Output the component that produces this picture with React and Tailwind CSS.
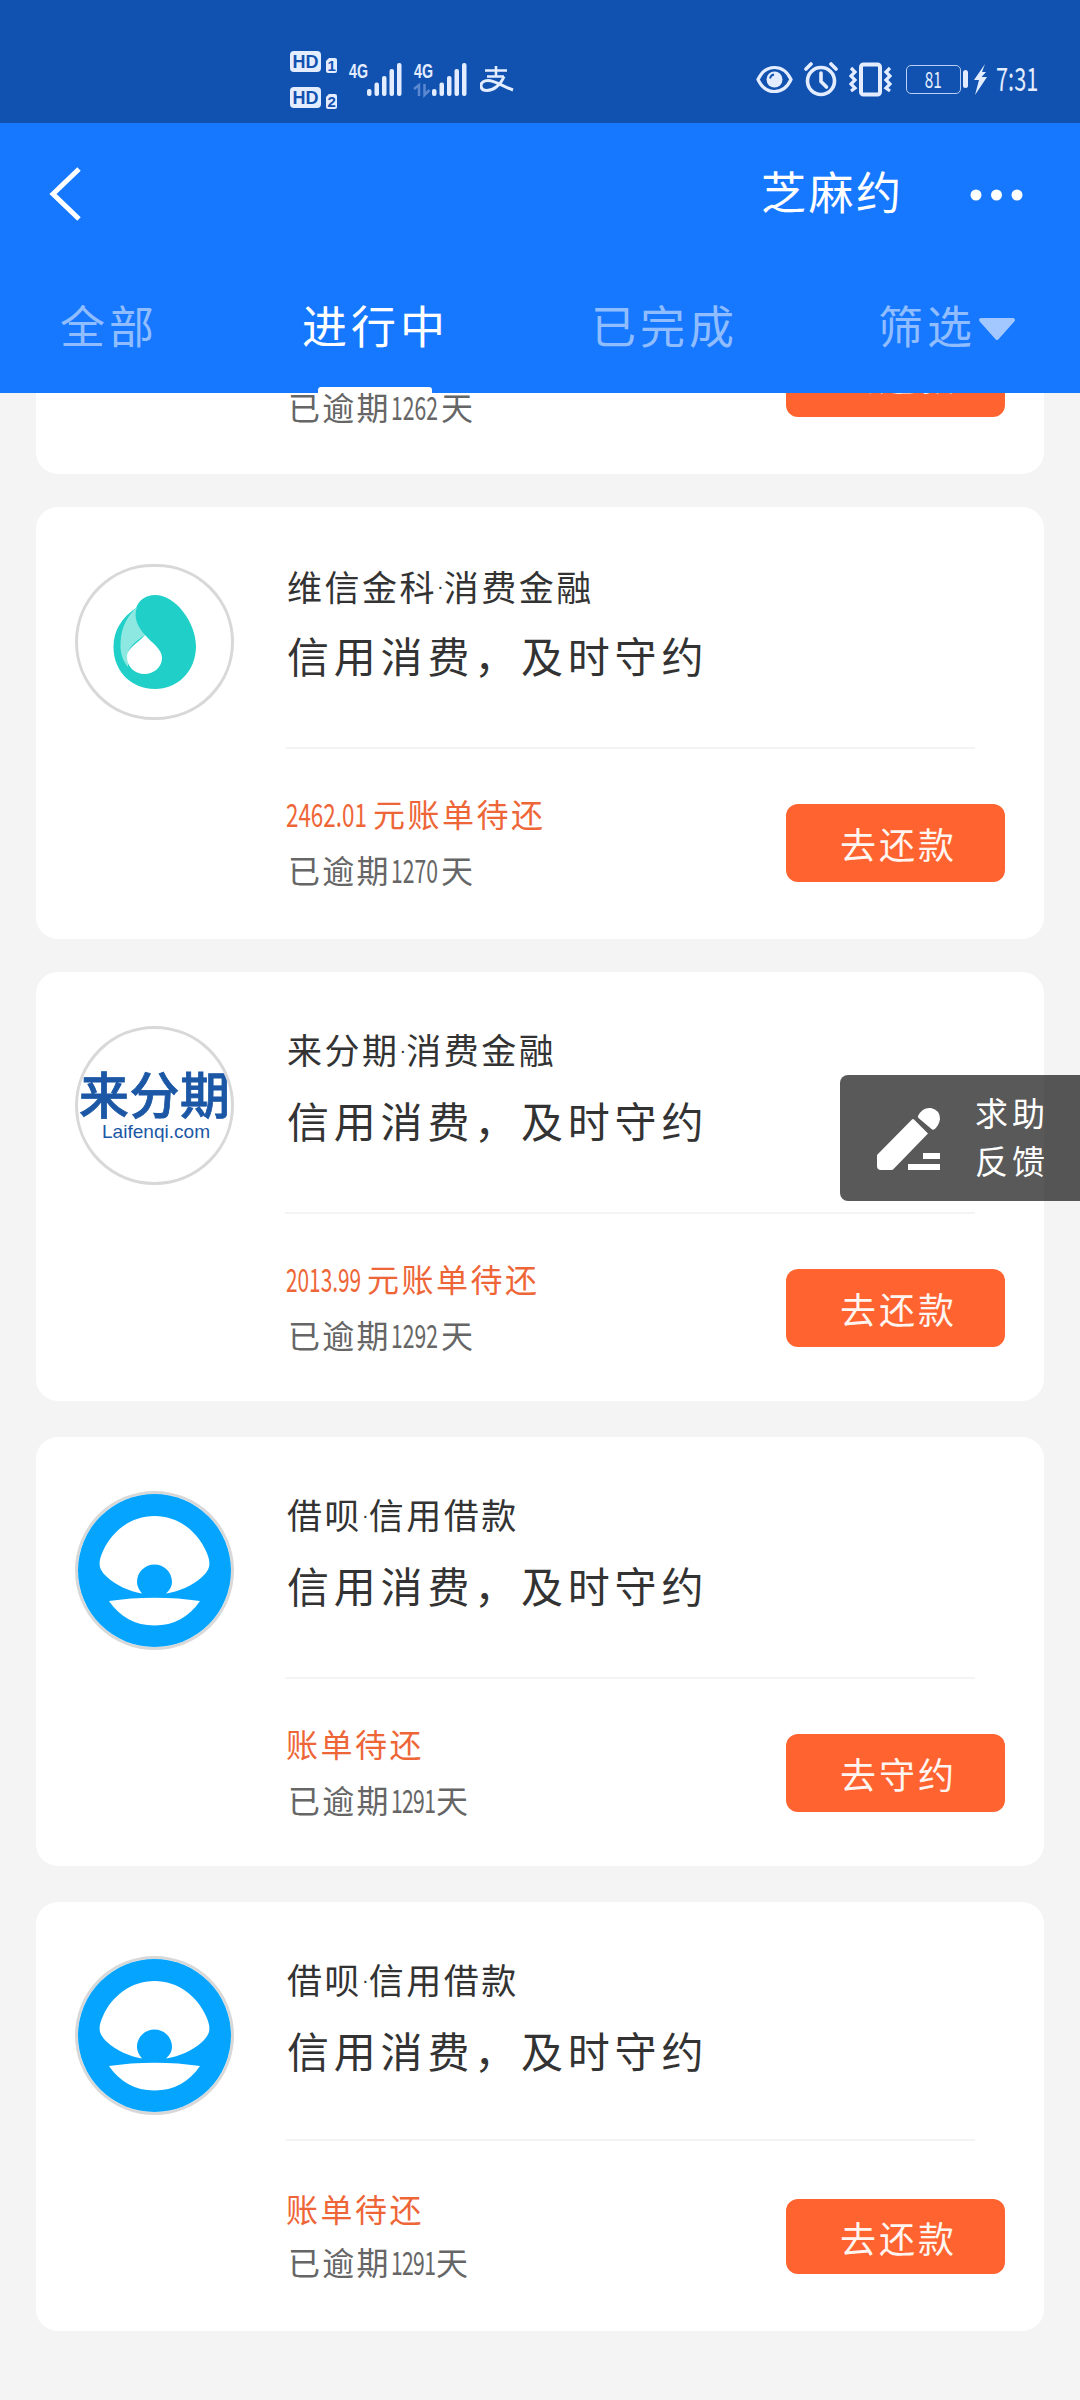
import React, { useState } from 'react';

const TABS = [
    { name: '全部', className: 'ml-[60px]' },
    { name: '进行中', className: 'ml-[144px]' },
    { name: '已完成', className: 'ml-[142px]' },
    { name: '筛选', className: 'ml-[140px]', filter: true },
];

const BILLS = [
    {
        id: 1, logo: 'drop', name: '维信金科', kind: '消费金融', amount: '2462.01', amountWidth: 'w-[87px] scale-x-[0.7]', days: '1270', action: '去还款',
        card: 'h-[432px] mb-[33px]', avatar: 'mt-[57px] h-[156px]', head: 'h-[242px] pt-[54px]', title: 'h-[50px]', button: 'mt-[55px] h-[78px]', lines: 'pt-[38px]', overdue: 'mt-[7px]',
    },
    {
        id: 2, logo: 'laifenqi', name: '来分期', kind: '消费金融', amount: '2013.99', amountWidth: 'w-[81px] scale-x-[0.65]', days: '1292', action: '去还款',
        card: 'h-[429px] mb-[36px]', avatar: 'mt-[54px] h-[159px]', head: 'h-[242px] pt-[51px]', title: 'h-[53px]', button: 'mt-[55px] h-[78px]', lines: 'pt-[38px]', overdue: 'mt-[7px]',
    },
    {
        id: 3, logo: 'shell', name: '借呗', kind: '信用借款', days: '1291', action: '去守约',
        card: 'h-[429px] mb-[36px]', avatar: 'mt-[54px] h-[159px]', head: 'h-[242px] pt-[51px]', title: 'h-[53px]', button: 'mt-[55px] h-[78px]', lines: 'pt-[38px]', overdue: 'mt-[7px]',
    },
    {
        id: 4, logo: 'shell', name: '借呗', kind: '信用借款', days: '1291', action: '去还款',
        card: 'h-[429px]', avatar: 'mt-[54px] h-[159px]', head: 'h-[239px] pt-[51px]', title: 'h-[53px]', button: 'mt-[58px] h-[75px]', lines: 'pt-[41px]', overdue: 'mt-[4px]',
    },
];

const HdBadge = ({ sim }) => (
    <svg className="overflow-visible" width="48" height="23" viewBox="0 0 48 23">
        <rect x="0" y="0" width="31" height="21" rx="4" fill="#e3edff" />
        <text x="2.5" y="17" fontSize="19" fontWeight="700" fill="#1152b0" textLength="26" lengthAdjust="spacingAndGlyphs" fontFamily="Liberation Sans, sans-serif">HD</text>
        <path d="M39 7h6q2 0 2 2v11q0 2-2 2h-7q-2 0-2-2V10z" fill="#e3edff" />
        <text x="37.500" y="20" fontSize="15" fontWeight="700" fill="#1152b0" fontFamily="Liberation Sans, sans-serif">{sim}</text>
    </svg>
);

const Signal = ({ data }) => (
    <svg className="overflow-visible" width="53" height="34" viewBox="0 0 53 34">
        <text x="0" y="15" fontSize="21" fontWeight="700" fill="#e3edff" textLength="19" lengthAdjust="spacingAndGlyphs" fontFamily="Liberation Sans, sans-serif">4G</text>
        {data && <path d="M0 26l5-4v11M5 22v11M10.500 21v11l5-5" fill="none" stroke="#5b88d0" strokeWidth="2.500" />}
        <g fill="#e3edff">
            <rect x="18" y="26" width="4.500" height="7" rx="2" />
            <rect x="25.500" y="19.500" width="4.500" height="13.500" rx="2" />
            <rect x="33" y="13" width="4.500" height="20" rx="2" />
            <rect x="40.500" y="6" width="4.500" height="27" rx="2" />
            <rect x="48" y="0" width="4.500" height="33" rx="2" />
        </g>
    </svg>
);

const StatusBar = () => (
    <div className="flex h-[123px] items-start bg-[#1152b0] text-[#e3edff]">
        <div className="ml-[290px] mt-[51px] flex flex-col gap-[13px]">
            <HdBadge sim="1" />
            <HdBadge sim="2" />
        </div>
        <div className="ml-[11px] mt-[63px] flex gap-3">
            <Signal />
            <Signal data />
        </div>
        <svg className="ml-[13px] mt-[66px]" width="34" height="27" viewBox="0 0 34 27" fill="none" stroke="#e3edff">
            <path d="M5 4.500h22M16 0v11M7 10.500h17" strokeWidth="2.600" />
            <path d="M24 10.500C20 20 13 24.500 7 24.500C2.500 24.500 1 22 1 19.500C1 16.500 4 14.500 8 14.500C15 14.500 22 20 33 24" strokeWidth="3" />
        </svg>
        <svg className="ml-[242px] mt-[65px]" width="37" height="29" viewBox="0 0 37 29">
            <path d="M2 14.500C6 6 12 2.500 18.500 2.500S31 6 35 14.500C31 23 25 26.500 18.500 26.500S6 23 2 14.500z" fill="none" stroke="#e3edff" strokeWidth="3.200" />
            <circle cx="18.500" cy="14.500" r="8" fill="#e3edff" />
            <path d="M14 13.500a5 5 0 0 1 4-4" fill="none" stroke="#1152b0" strokeWidth="1.800" />
        </svg>
        <svg className="ml-[11px] mt-[62px]" width="34" height="35" viewBox="0 0 34 35" fill="none" stroke="#e3edff" strokeWidth="3.600">
            <circle cx="17" cy="19" r="13.500" />
            <path d="M17 11v8.500l5.500 5.500" strokeLinecap="round" />
            <path d="M2 7l5-5M32 7l-5-5" strokeLinecap="round" />
        </svg>
        <svg className="ml-[11px] mt-[62px]" width="43" height="35" viewBox="0 0 43 35" fill="none" stroke="#e3edff">
            <rect x="12" y="2.500" width="19" height="30" rx="2.500" strokeWidth="4" />
            <path d="M2 6l4 4-4 4 4 4-4 4 4 4-4 3M41 6l-4 4 4 4-4 4 4 4-4 4 4 3" strokeWidth="3.200" />
        </svg>
        <div className="ml-[14px] mt-[65px] flex h-[29px] w-[55px] items-center justify-center rounded-[5px] border-[1.5px] border-[#b9cff5]">
            <span className="mt-[-3px] scale-x-[0.7] text-[22px] leading-none">81</span>
        </div>
        <div className="ml-[2px] mt-[70px] h-[18px] w-[5px] rounded-sm bg-[#e3edff]" />
        <svg className="ml-[6px] mt-[64px]" width="13" height="31" viewBox="0 0 13 31">
            <path d="M11 0L0 16h5L1 31L13 13H7.500L12 8H8z" fill="#e3edff" />
        </svg>
        <span className="ml-[9px] mt-[59px] w-[42px] origin-left scale-x-[0.68] whitespace-nowrap text-[32px] leading-[36px]">7:31</span>
    </div>
);

const Header = ({ activeTab, setActiveTab }) => (
    <header className="h-[270px] bg-[#1677ff] text-white">
        <div className="flex h-[141px] items-center">
            <svg className="ml-[48px]" width="34" height="54" viewBox="0 0 34 54" fill="none" stroke="#fff" strokeWidth="5">
                <path d="M31 2L5 27L31 52" />
            </svg>
            <h1 className="-mt-[6px] ml-[679px] w-[142px] whitespace-nowrap text-[45px] tracking-[2.500px]">芝麻约</h1>
            <svg className="ml-[67px] mt-[3px]" width="54" height="12" viewBox="0 0 54 12" fill="#fff">
                <circle cx="6" cy="6" r="5.500" />
                <circle cx="26.500" cy="6" r="5.500" />
                <circle cx="47" cy="6" r="5.500" />
            </svg>
        </div>
        <nav className="flex h-[129px]">
            {TABS.map((tab) => (
                <button
                    key={tab.name}
                    onClick={() => setActiveTab(tab.name)}
                    className={`${tab.className} relative flex items-start whitespace-nowrap pt-[27px] text-[45px] leading-[68px] tracking-[4px] ${activeTab === tab.name ? 'text-white' : 'text-[#8fbdff]'}`}
                >
                    <span>{tab.name}</span>
                    {tab.filter && (
                        <svg className="ml-[1px] mt-[26px]" width="40" height="26" viewBox="0 0 40 26">
                            <path d="M4 3h32L20 21z" fill="#a3c8ff" stroke="#a3c8ff" strokeWidth="4" strokeLinejoin="round" />
                        </svg>
                    )}
                    {activeTab === tab.name && <i className="absolute bottom-0 left-[16px] h-[6px] w-[114px] rounded-t-[3px] bg-white" />}
                </button>
            ))}
        </nav>
    </header>
);

const Logo = ({ type }) => {
    switch (type) {
        case 'drop':
            return (
                <svg className="h-full w-full" viewBox="0 0 159 156">
                    <path d="M80 31C101 31 121 59 121 82C121 108 102 125 80 125C57 125 38.500 108 38.500 83C38.500 65 48 53 61 44C64 36 71 31 80 31z" fill="#20d0c8" />
                    <path d="M62 43C49 55 45.500 68 45.500 82C45.500 90 48 97 53 103L53 88C56 80 63 76 70 71C63 63 58 54 62 43z" fill="#8ee8e2" />
                    <path d="M70 71C78 80 87 85 87 94C87 103 79 110 69.500 110C60 110 52 103 52 93C52 84 62 80 70 71z" fill="#fff" />
                </svg>
            );
        case 'laifenqi':
            return (
                <svg className="h-full w-full" viewBox="0 0 159 159">
                    <text x="4" y="88" fontSize="50" fontWeight="500" fill="#1b57a5" stroke="#1b57a5" strokeWidth="0.800" textLength="151" fontFamily="Noto Sans CJK SC, sans-serif">来分期</text>
                    <text x="27" y="112" fontSize="19" fill="#1b57a5" textLength="108" lengthAdjust="spacingAndGlyphs" fontFamily="Liberation Sans, sans-serif">Laifenqi.com</text>
                </svg>
            );
        default:
            return (
                <svg className="h-full w-full" viewBox="0 0 159 159">
                    <circle cx="79.500" cy="79.500" r="77" fill="#05a5ff" />
                    <path d="M79.500 25C103 25 122 40 131 60C138 75 133 80 127 86C117 95 105 100 91 102.500C95 99 97 95 97 91C97 81 89 73.500 79.500 73.500S62 81 62 91C62 95 64 99 67 102.500C54 100 42 95 32 86C26 80 21 75 28 60C37 40 56 25 79.500 25z" fill="#fff" />
                    <path d="M34 110C62 105.500 97 105.500 125 110C114 126 99 134.500 79.500 134.500S45 126 34 110z" fill="#fff" />
                </svg>
            );
    }
};

const Overdue = ({ days, className }) => (
    <p className={`${className} flex h-[48px] items-center whitespace-nowrap pl-[3px] text-[32px] text-[#666]`}>
        <span className="tracking-[2.300px]">已逾期</span>
        <span className={`origin-left scale-x-[0.66] ${days === '1291' ? 'w-[45px] tracking-[-1px]' : 'w-[50px]'}`}>{days}</span>
        <span>天</span>
    </p>
);

const PayButton = ({ className, children }) => (
    <button className={`${className} flex w-[219px] shrink-0 items-center justify-center rounded-xl bg-[#ff632f] pl-[6px] text-[36px] tracking-[3px] text-[#fff5f0]`}>
        {children}
    </button>
);

const BillCard = ({ bill }) => (
    <section className={`${bill.card} flex shrink-0 rounded-[22px] bg-white pl-[39px] pr-[39px]`}>
        <div className={`${bill.avatar} w-[159px] shrink-0 overflow-hidden rounded-full border-[3px] border-[#d8d8d8]`}>
            <div className="-m-[3px] h-[calc(100%+6px)]">
                <Logo type={bill.logo} />
            </div>
        </div>
        <div className="ml-[51px] flex-1">
            <div className={`${bill.head} mr-[30px] border-b-2 border-[#f4f4f4] text-[#333]`}>
                <h2 className={`${bill.title} flex items-center whitespace-nowrap pl-[2px] text-[35px] tracking-[2.500px]`}>
                    {bill.name}
                    <span className="font-['Liberation_Sans',sans-serif] text-[20px] tracking-normal">·</span>
                    {bill.kind}
                </h2>
                <p className="flex h-[87px] items-center whitespace-nowrap pl-[2px] text-[42px] tracking-[4.800px]">信用消费，及时守约</p>
            </div>
            <div className="flex justify-between">
                <div className={bill.lines}>
                    <p className="flex h-[51px] items-center whitespace-nowrap pl-[1px] text-[32px] text-[#ee6637]">
                        {bill.amount && <span className={`${bill.amountWidth} origin-left`}>{bill.amount}</span>}
                        <span className="tracking-[2.500px]">{bill.amount ? '元账单待还' : '账单待还'}</span>
                    </p>
                    <Overdue days={bill.days} className={bill.overdue} />
                </div>
                <PayButton className={bill.button}>{bill.action}</PayButton>
            </div>
        </div>
    </section>
);

const FeedbackButton = () => (
    <button className="absolute right-0 top-[1075px] flex h-[126px] w-[240px] items-center rounded-l-lg bg-black/65 text-white">
        <svg className="ml-[37px]" width="63" height="63" viewBox="0 0 63 63" fill="#fff">
            <path d="M37 12.500L51 26.500L17 61.500Q16 63 14 63H4Q0 63 0 59V48L34.500 13Q36 11.500 37 12.500z" />
            <path d="M41 9Q45.500 0 54 1Q63 3 63 12Q62 19 57 22.500Q55.500 23 54.500 22L41.500 11Q40.500 10 41 9z" />
            <path d="M46 46h17v6H46zM31 57h32v6H31z" />
        </svg>
        <span className="-mt-1 ml-[35px] text-[33px] leading-[48px] tracking-[4px]">求助<br />反馈</span>
    </button>
);

const App = () => {
    const [activeTab, setActiveTab] = useState('进行中');

    return (
        <div className="relative flex h-[2400px] w-[1080px] flex-col overflow-hidden bg-[#f4f4f4] font-['Noto_Sans_CJK_SC',sans-serif]">
            <StatusBar />
            <Header activeTab={activeTab} setActiveTab={setActiveTab} />
            <main className="flex flex-1 flex-col overflow-hidden px-9">
                {/* tail of the card scrolled under the header */}
                <section className="mb-[33px] flex h-[81px] shrink-0 items-end justify-between overflow-hidden rounded-b-[22px] bg-white pl-[249px] pr-[39px]">
                    <Overdue days="1262" className="mb-[44px]" />
                    <PayButton className="mb-[57px] h-[78px] pb-[6px]">去还款</PayButton>
                </section>
                {BILLS.map((bill) => (
                    <BillCard key={bill.id} bill={bill} />
                ))}
            </main>
            <FeedbackButton />
        </div>
    );
};

export default App;
